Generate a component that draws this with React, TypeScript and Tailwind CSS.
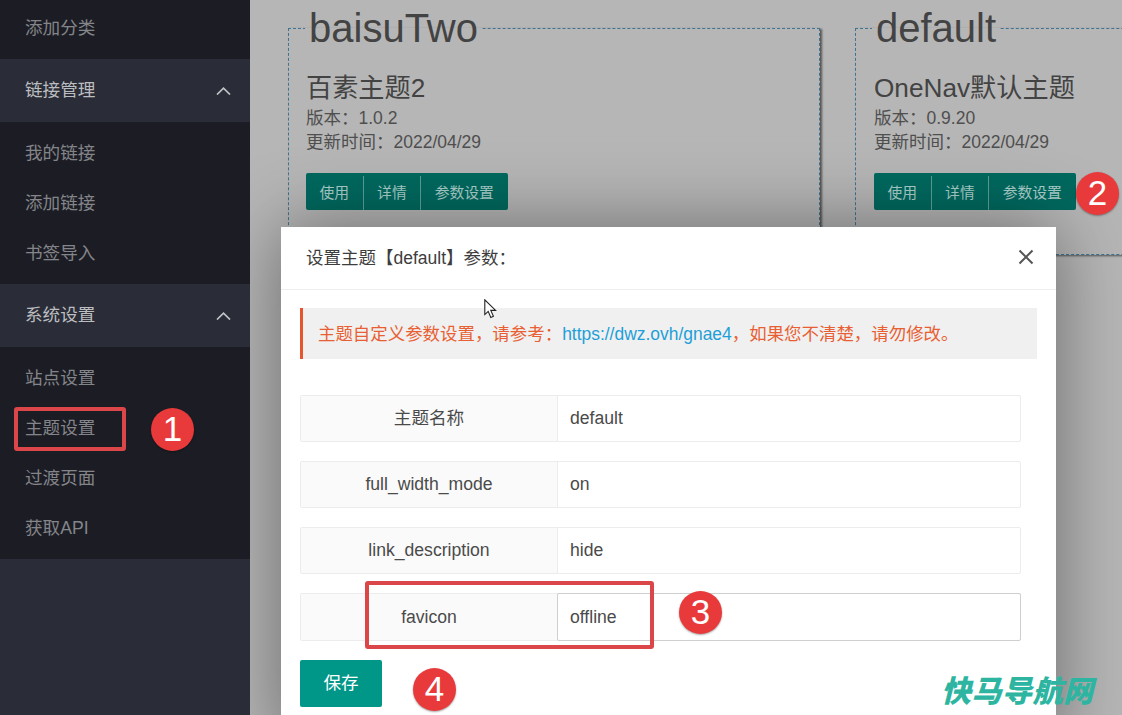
import React from "react";

const FONT = "font-['Liberation_Sans','Noto_Sans_CJK_SC',sans-serif]";

function SideItem({ label }: { label: string }) {
  return <div className="flex h-[50px] items-center pl-[25px] text-[17.6px] text-[#84858a]">{label}</div>;
}

function SideHead({ label }: { label: string }) {
  return (
    <div className="flex h-[63px] items-center justify-between bg-[#2a2d37] pl-[25px] pr-[19px] text-[17.6px] text-[#bcbdc0]">
      <span>{label}</span>
      <svg width="15" height="8" viewBox="0 0 15 8" fill="none" stroke="#c2c3c6" strokeWidth="1.7">
        <path d="M1 7.5 7.5 1.2 14 7.5" />
      </svg>
    </div>
  );
}

function Card({ name, title, version, wide }: { name: string; title: string; version: string; wide?: boolean }) {
  return (
    <fieldset className={`relative mt-[3px] h-[252px] shrink-0 border border-dashed border-[#3f7391] shadow-[2px_1px_2px_#555] ${wide ? "w-[400px] pl-[18px]" : "w-[532px] pl-[17px]"}`}>
      <legend className={`px-[4px] text-[40px] leading-[50px] text-[#434343] ${wide ? "ml-[-2px]" : "ml-[-1px]"}`}>{name}</legend>
      <div className="mt-[17px] text-[26.2px] leading-[36px] text-[#434343]">{title}</div>
      <div className="text-[17.5px] leading-[24px] text-[#4f4f4f]">版本：{version}</div>
      <div className="text-[17.5px] leading-[24px] text-[#4f4f4f]">更新时间：2022/04/29</div>
      <div className="mt-[19px] flex h-[37px] w-fit overflow-hidden rounded-[2px] bg-[#00695f] pt-[3px] text-[14.8px] text-[#a9cec9]">
        <span className="flex items-center px-[13.5px]">使用</span>
        <span className="flex items-center border-l border-[#5d9f97] px-[13.5px]">详情</span>
        <span className="flex items-center border-l border-[#5d9f97] pl-[13.5px] pr-[14px]">参数设置</span>
      </div>
    </fieldset>
  );
}

function Row({ label, value, active }: { label: string; value: string; active?: boolean }) {
  return (
    <div className={`flex w-[721px] rounded-[2px] border border-[#ececec] ${active ? "h-[48px]" : "h-[47px]"}`}>
      <div className="flex w-[257px] items-center justify-center border-r border-[#ececec] bg-[#fafafa] text-[17.6px] text-[#4a4a4a]">{label}</div>
      {active ? (
        <div className="-my-px -ml-px -mr-px flex flex-1 items-center rounded-[2px] border border-[#cfcfcf] pl-[12px] text-[17.6px] text-[#4a4a4a]">{value}</div>
      ) : (
        <div className="flex flex-1 items-center pl-[12px] text-[17.6px] text-[#4a4a4a]">{value}</div>
      )}
    </div>
  );
}

function Badge({ n, className }: { n: string; className: string }) {
  return (
    <div className={`absolute z-20 flex h-[43px] w-[43px] items-center justify-center rounded-full bg-[#e93a3b] text-[35px] text-white shadow-[0_1px_2px_rgba(0,0,0,0.35)] ${className}`}>{n}</div>
  );
}

export default function App() {
  return (
    <div className={`relative flex h-[715px] w-[1122px] overflow-hidden ${FONT}`}>
      <aside className="z-10 flex w-[250px] shrink-0 flex-col bg-[#2a2d37]">
        <div className="bg-[#1c1d24] pb-[6px] pt-[3px]"><SideItem label="添加分类" /></div>
        <SideHead label="链接管理" />
        <div className="bg-[#1c1d24] pb-[6px] pt-[6px]">
          <SideItem label="我的链接" />
          <SideItem label="添加链接" />
          <SideItem label="书签导入" />
        </div>
        <SideHead label="系统设置" />
        <div className="bg-[#1c1d24] pb-[6px] pt-[6px]">
          <SideItem label="站点设置" />
          <SideItem label="主题设置" />
          <SideItem label="过渡页面" />
          <SideItem label="获取API" />
        </div>
      </aside>

      <main className="relative flex-1 overflow-hidden bg-[#b6b6b6]">
        <div className="flex gap-[35px] pl-[38px]">
          <Card name="baisuTwo" title="百素主题2" version="1.0.2" />
          <Card name="default" title="OneNav默认主题" version="0.9.20" wide />
        </div>
        <div className="absolute left-[31px] top-[227px] h-[520px] w-[775px] bg-white shadow-[0_0_70px_rgba(0,0,0,0.42)]">
          <div className="flex h-[63px] items-center justify-between border-b border-[#eeeeee] pl-[25px] pr-[21px] text-[17.5px] text-[#3d3d3d]">
            <span>设置主题【default】参数：</span>
            <svg width="18" height="18" viewBox="0 0 18 18" fill="none" stroke="#555" strokeWidth="2" className="-mt-[2px]">
              <path d="M2.5 2.5 15.5 15.5M15.5 2.5 2.5 15.5" />
            </svg>
          </div>
          <div className="flex flex-col pl-[19px] pt-[18px]">
            <div className="mb-[36px] flex h-[51px] w-[737px] items-center border-l-[3px] border-[#e4572e] bg-[#f0f0f0] pl-[15px] pt-[2px] text-[17.46px] text-[#e85f33]">
              <span>主题自定义参数设置，请参考：</span>
              <span className="text-[#1e9fd8]">https://dwz.ovh/gnae4</span>
              <span>，如果您不清楚，请勿修改。</span>
            </div>
            <div className="flex flex-col gap-[19px]">
              <Row label="主题名称" value="default" />
              <Row label="full_width_mode" value="on" />
              <Row label="link_description" value="hide" />
              <Row label="favicon" value="offline" active />
            </div>
            <div className="mt-[19px] flex h-[47px] w-[82px] items-center justify-center rounded-[2px] bg-[#009688] text-[17.6px] text-white">保存</div>
          </div>
        </div>
      </main>

      <div className="absolute left-[14px] top-[407px] z-20 h-[44px] w-[112px] rounded-[3px] border-[4px] border-[#db4648]" />
      <div className="absolute left-[365px] top-[581px] z-20 h-[68px] w-[289px] rounded-[3px] border-[4px] border-[#db4648]" />
      <Badge n="1" className="left-[151px] top-[408px]" />
      <Badge n="2" className="left-[1076px] top-[172px]" />
      <Badge n="3" className="left-[679px] top-[591px]" />
      <Badge n="4" className="left-[413px] top-[668px]" />

      <svg className="absolute left-[484px] top-[299px] z-20" width="14" height="20" viewBox="0 0 14 20" fill="white" stroke="#222" strokeWidth="1.1">
        <path d="M.8.8V15.6L4.2 12.4 6.8 18.4 9.4 17.2 6.8 11.4H11.6Z" />
      </svg>

      <div className="absolute left-[941px] top-[672px] z-20 text-[30px] font-black italic leading-[40px] tracking-[0.5px] text-[#2db5a1]">快马导航网</div>
    </div>
  );
}
